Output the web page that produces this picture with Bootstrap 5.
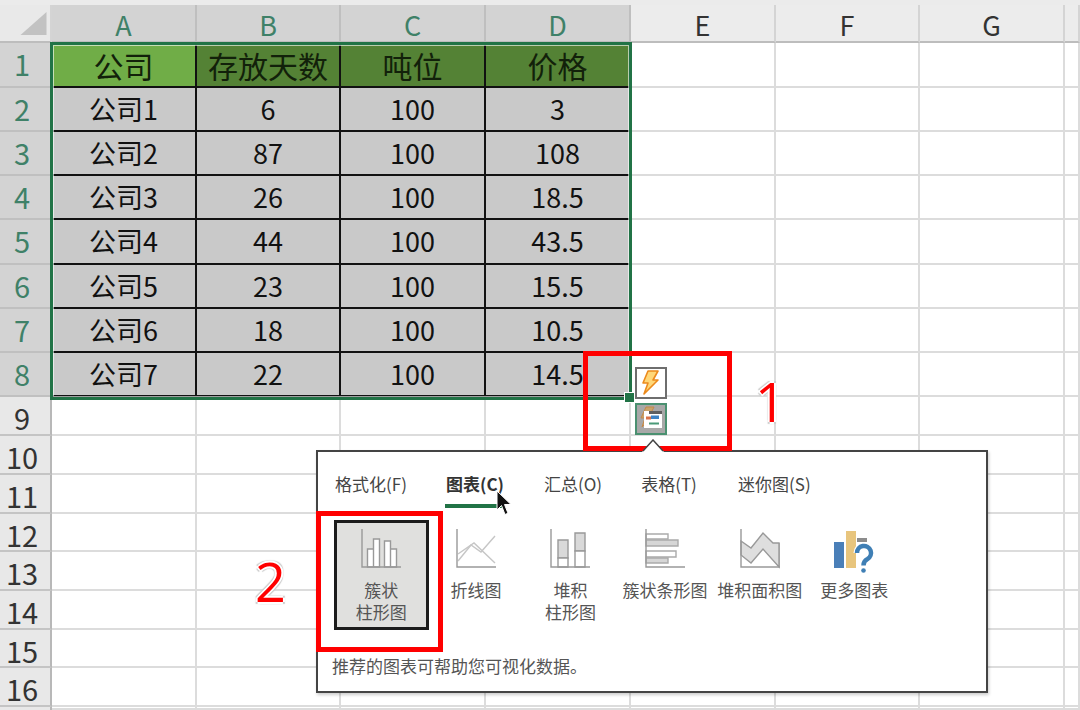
<!DOCTYPE html>
<html lang="zh-CN">
<head>
<meta charset="utf-8"/>
<meta content="width=device-width, initial-scale=1.0" name="viewport"/>
<title>Excel 快速分析</title>
<link href="https://cdn.jsdelivr.net/npm/bootstrap@5.3.2/dist/css/bootstrap.min.css" rel="stylesheet"/>
<style>
  body { margin: 0; background: #fff; font-family: "Noto Sans CJK SC", sans-serif; color: #222; }
  .sheet { position: relative; width: 1080px; height: 710px; overflow: hidden; padding-top: 5px; background: #ebebeb; }
  .sheet-grid {
    display: grid;
    grid-template-columns: 52px 145px 144px 145px 145px 145px 144px 145px 15px;
    grid-template-rows: 38px 45px 44px 44px 44px 45px 44px 44px 44px 39px 39px 39px 38px 39px 39px 38px 39px 3px;
    background: #fff;
  }
  .gc { display: flex; align-items: center; justify-content: center; min-width: 0; line-height: 1; border-right: 2px solid #dcdcdc; border-bottom: 2px solid #dcdcdc; }
  .gc-corner { background: #e9e9e9; border-right: 2px solid #d4d4d4; border-bottom: 2px solid #bdbdbd; }
  .gc-col { background: #ececec; font-size: 27px; color: #333; padding-top: 3px; border-right-color: #d4d4d4; border-bottom: 2px solid #bdbdbd; }
  .gc-row { background: #e8e8e8; font-size: 29px; color: #333; padding-top: 4px; padding-right: 6px; border-right-color: #b8b8b8; border-bottom-color: #c4c4c4; }
  .gc-col.on { background: #d3d3d3; color: #3f8168; border-right-color: #bfbfbf; }
  .gc-row.on { background: #d3d3d3; color: #3f8168; padding-top: 0; padding-bottom: 2px; border-bottom-color: #c0c0c0; }
  .gc-data { background: #c9c9c9; color: #111; font-size: 27px; padding-bottom: 2px; border-right-color: #111; border-bottom-color: #111; }
  .gc-head { background: #548235; color: #12210a; font-size: 30px; border-right-color: #111; border-bottom-color: #111; }
  .gc-head.first { background: #70ad47; }
  .corner-tri { width: 100%; height: 100%; }
  .selection { position: absolute; left: 50px; top: 42px; width: 582px; height: 358px; border: 3px solid #217346; box-shadow: inset 0 0 0 1px rgba(255,255,255,.6); pointer-events: none; }
  .sel-handle { position: absolute; left: 625px; top: 393px; width: 9px; height: 9px; background: #217346; outline: 1px solid #fff; }
  .tag-btn { position: absolute; left: 635px; width: 32px; height: 32px; padding: 0; display: block; }
  .tag-one { top: 367px; background: #fff; border: 2px solid #6e6e6e; }
  .tag-two { top: 403px; background: #a8a8a8; border: 2px solid #4a9070; }
  .red-box { position: absolute; border: 5px solid #f00; pointer-events: none; }
  .box-one { left: 583px; top: 351px; width: 149px; height: 100px; z-index: 3; }
  .box-two { left: 316px; top: 511px; width: 127px; height: 141px; z-index: 3; }
  .red-num { position: absolute; color: #f00; font-family: "Open Sans", sans-serif; font-weight: 500; font-size: 54px; line-height: 1; z-index: 4;
    text-shadow: 2px 0 0 #fff, -2px 0 0 #fff, 0 2px 0 #fff, 0 -2px 0 #fff, 2px 2px 1px #ccc, -2px 2px 1px #ccc, 2px -2px 1px #ccc, -2px -2px 1px #ccc; }
  .num-one { left: 755px; top: 374px; }
  .num-two { left: 255px; top: 554px; }
  .qa-pop { position: absolute; left: 316px; top: 450px; width: 672px; height: 243px; background: #fff; border: 2px solid #444; box-shadow: 1px 2px 3px rgba(0,0,0,.2); color: #444; font-size: 17px; z-index: 2; }
  .qa-notch { position: absolute; left: 642px; top: 439px; z-index: 3; display: block; }
  .qa-tabs { height: 56px; padding-left: 17px; gap: 38px; }
  .qa-tab { padding-top: 20px; line-height: 24px; height: 56px; white-space: nowrap; }
  .qa-tab:nth-child(1), .qa-tab:nth-child(5) { width: 72px; }
  .qa-tab:nth-child(2), .qa-tab:nth-child(3) { width: 60px; }
  .qa-tab:nth-child(4) { width: 56px; margin-right: 3px; }
  .qa-tab.on { color: #333; font-weight: 700; border-bottom: 4px solid #217346; }
  .qa-tiles { height: 110px; margin-top: 12px; padding-left: 16px; }
  .qa-tile { width: 94.6px; height: 110px; padding-top: 9px; line-height: 22px; white-space: nowrap; color: #555; }
  .qa-tile.on { background: #e0e0de; border: 3px solid #1c1c1c; padding-top: 6px; }
  .qa-tile svg { display: block; flex: none; margin-bottom: 10px; }
  .qa-tile svg.tall-icon { margin-bottom: 6px; }
  .qa-foot { margin-top: 24px; padding-left: 14px; line-height: 24px; color: #555; }
  .mouse { position: absolute; left: 496px; top: 490px; z-index: 5; display: block; }
</style>
</head>
<body>
<div class="sheet">
  <div class="sheet-grid" id="grid"></div>

  <div class="selection"></div>
  <div class="sel-handle"></div>

  <svg class="tag-btn tag-one" viewBox="0 0 28 28">
    <path d="M11 2h10l-5 9h5L7 25l4-11H6z" fill="#ffd778" stroke="#ec8a1c" stroke-width="1.6" stroke-linejoin="round"/>
  </svg>
  <svg class="tag-btn tag-two" viewBox="0 0 28 28">
    <path d="M9 2h8l-4 8h4L5 22l3-9H4z" fill="#c9a36a" stroke="#c4894a" stroke-width="1"/>
    <rect x="7" y="6" width="18" height="17" fill="#fff"/>
    <rect x="12" y="6" width="13" height="3" fill="#5f5f5f"/>
    <rect x="14" y="10.500" width="8" height="3.500" fill="#3f83c4"/>
    <rect x="9" y="11.500" width="5" height="3" fill="#d9734a"/>
    <rect x="12" y="17.500" width="10" height="2" fill="#4a9a78"/>
  </svg>

  <div class="red-box box-one"></div>
  <div class="red-box box-two"></div>
  <div class="red-num num-one">1</div>
  <div class="red-num num-two">2</div>

  <svg class="qa-notch" width="22" height="13" viewBox="0 0 22 13">
    <path d="M0 13 11 1 22 13z" fill="#fff"/>
    <path d="M1 12 11 1l10 11" fill="none" stroke="#444" stroke-width="1.500"/>
  </svg>

  <div class="qa-pop d-flex flex-column">
    <div class="qa-tabs d-flex">
      <div class="qa-tab text-center">格式化(F)</div>
      <div class="qa-tab text-center on">图表(C)</div>
      <div class="qa-tab text-center">汇总(O)</div>
      <div class="qa-tab text-center">表格(T)</div>
      <div class="qa-tab text-center">迷你图(S)</div>
    </div>
    <div class="qa-tiles d-flex">
      <div class="qa-tile on d-flex flex-column align-items-center text-center">
        <svg width="40" height="40" viewBox="0 0 40 40" fill="#fff" stroke="#999" stroke-width="1.400">
          <path d="M6.500 20h6v18h-6zM12.500 10h6v28h-6zM23.500 12h6v26h-6zM29.500 20h6v18h-6z"/>
          <path d="M1 0v38h39" fill="none"/>
        </svg>
        <div>簇状<br/>柱形图</div>
      </div>
      <div class="qa-tile d-flex flex-column align-items-center text-center">
        <svg width="40" height="40" viewBox="0 0 40 40" fill="none" stroke="#999" stroke-width="1.400">
          <path d="M2 32 15 16l10 7L39 7" stroke="#c6c6c6"/>
          <path d="M2 25 18 14l21 20" stroke="#c6c6c6"/>
          <path d="M1 0v38h39"/>
        </svg>
        <div>折线图</div>
      </div>
      <div class="qa-tile d-flex flex-column align-items-center text-center">
        <svg width="40" height="40" viewBox="0 0 40 40" fill="#fff" stroke="#999" stroke-width="1.400">
          <path d="M8 11h10v18H8z" fill="#d9d9d9"/><path d="M8 29h10v9H8z"/>
          <path d="M25 4h10v18H25z" fill="#d9d9d9"/><path d="M25 22h10v16H25z"/>
          <path d="M1 0v38h39" fill="none"/>
        </svg>
        <div>堆积<br/>柱形图</div>
      </div>
      <div class="qa-tile d-flex flex-column align-items-center text-center">
        <svg width="40" height="40" viewBox="0 0 40 40" fill="#fff" stroke="#aaa" stroke-width="1.400">
          <path d="M1 5h22v5H1z"/><path d="M1 11h32v6H1z" fill="#d6d6d6"/>
          <path d="M1 22h30v6H1z"/><path d="M1 29h22v5H1z" fill="#d6d6d6"/>
          <path d="M1 0v38h39" fill="none" stroke="#999"/>
        </svg>
        <div>簇状条形图</div>
      </div>
      <div class="qa-tile d-flex flex-column align-items-center text-center">
        <svg width="40" height="40" viewBox="0 0 40 40" fill="#dedede" stroke="#999" stroke-width="1.400">
          <path d="M1 12 11 19 23 4l10 10h6v24L23 20 11 34 1 26z"/>
          <path d="M1 0v38h39V14" fill="none"/>
        </svg>
        <div>堆积面积图</div>
      </div>
      <div class="qa-tile d-flex flex-column align-items-center text-center">
        <svg class="tall-icon" width="40" height="44" viewBox="0 0 40 44" fill="none">
          <rect x="0" y="13" width="10" height="26" fill="#4a7fb8"/>
          <rect x="12" y="2" width="10" height="37" fill="#e8c57d"/>
          <rect x="23" y="9" width="10" height="4" fill="#8c8c8c"/>
          <path d="M23 24a7 7 0 1 1 10.500 6q-4 2-4 6.500" stroke="#fff" stroke-width="7"/>
          <path d="M23 24a7 7 0 1 1 10.500 6q-4 2-4 6.500" stroke="#3f7fb5" stroke-width="4.500"/>
          <circle cx="29.500" cy="41.500" r="2.300" fill="#3f7fb5"/>
        </svg>
        <div>更多图表</div>
      </div>
    </div>
    <div class="qa-foot">推荐的图表可帮助您可视化数据。</div>
  </div>

  <svg class="mouse" width="16" height="27" viewBox="0 0 16 27">
    <path d="M1 1v19l4.500-4.500 3.500 9 3-1.300-3.500-8.700H15z" fill="#111" stroke="#fff" stroke-width="1"/>
  </svg>
</div>

<script src="https://cdn.jsdelivr.net/npm/bootstrap@5.3.2/dist/js/bootstrap.bundle.min.js"></script>
<script>
  const cols = ['A', 'B', 'C', 'D', 'E', 'F', 'G'];
  const head = ['公司', '存放天数', '吨位', '价格'];
  const rows = [
    ['公司1', 6, 100, 3],
    ['公司2', 87, 100, 108],
    ['公司3', 26, 100, 18.5],
    ['公司4', 44, 100, 43.5],
    ['公司5', 23, 100, 15.5],
    ['公司6', 18, 100, 10.5],
    ['公司7', 22, 100, 14.5]
  ];
  const grid = document.getElementById('grid');

  function cell(cls, text) {
    const d = document.createElement('div');
    d.className = 'gc ' + cls;
    if (text !== undefined) d.textContent = text;
    grid.appendChild(d);
    return d;
  }

  cell('gc-corner').innerHTML = '<svg class="corner-tri" viewBox="0 0 49 36"><path d="M20 30 46 7v23z" fill="#c2c2c2"/></svg>';
  cols.forEach((c, i) => cell('gc-col' + (i < 4 ? ' on' : ''), c));
  cell('gc-col');

  for (let r = 1; r <= 17; r++) {
    cell('gc-row' + (r <= 8 ? ' on' : ''), r <= 16 ? r : '');
    for (let c = 0; c < 8; c++) {
      if (r === 1 && c < 4) cell('gc-head' + (c === 0 ? ' first' : ''), head[c]);
      else if (r <= 8 && c < 4) cell('gc-data', rows[r - 2][c]);
      else cell('');
    }
  }
</script>
</body>
</html>
